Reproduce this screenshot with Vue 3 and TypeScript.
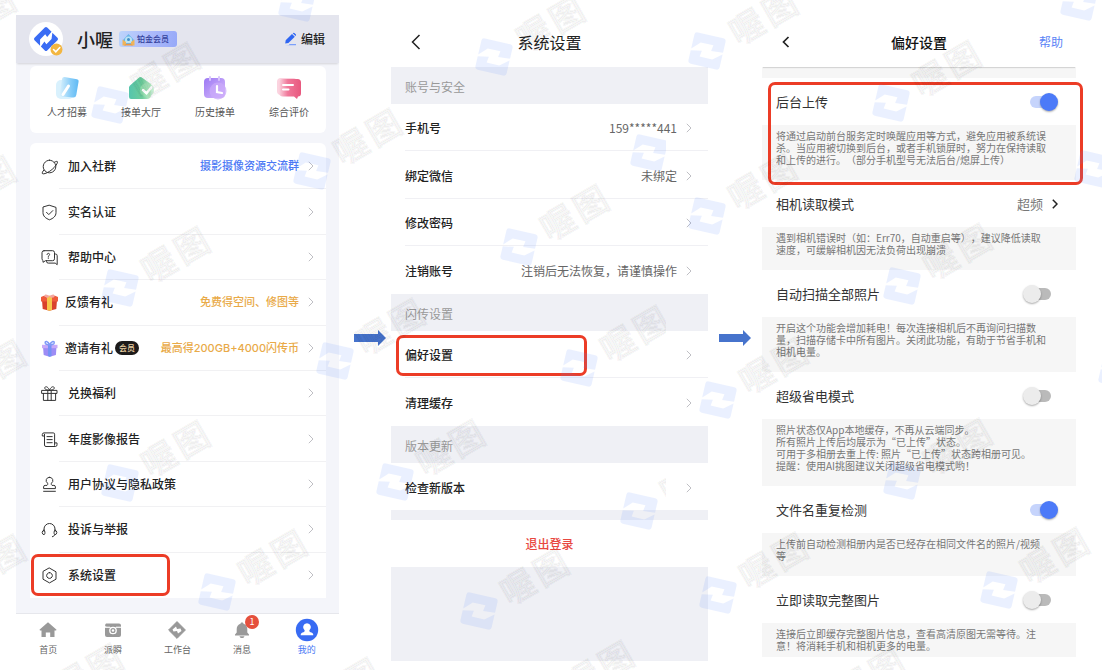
<script setup lang="ts">
import { reactive } from 'vue'

interface MenuItem {
  label: string
  icon: string
  value?: string
  tone?: 'blue' | 'gold'
  member?: boolean
  marked?: boolean
}

interface SettingRow {
  label: string
  value?: string
  marked?: boolean
}

interface Preference {
  id: string
  label: string
  lines: string[]
  kind: 'switch' | 'link'
  on?: boolean
  value?: string
  marked?: boolean
}

const strokes: Record<string, string[]> = {
  planet: [
    'M8.5 2.2a6.3 6.3 0 1 0 .01 0z',
    'M13.4 4.2C16 2.9 17 3 16.2 5.2c-1 2.600-4.300 5.900-7.400 8-3.300 2.200-6.900 3.300-7.500 2.300-.3-.7.3-1.900 1.600-3.500',
  ],
  shield: ['M8.500 1.300 15 3.400v5.200c0 3.600-2.700 5.800-6.500 7.200C4.700 14.400 2 12.200 2 8.600V3.400z', 'M5.500 8.300l2.300 2.300 4-4'],
  help: [
    'M3 1.700h8.600a1.900 1.900 0 0 1 1.900 1.900v6.200a1.900 1.900 0 0 1-1.900 1.900H4.500L2 13.300V11.500a1.900 1.900 0 0 1-1-1.700V3.600a1.900 1.900 0 0 1 2-1.900z',
    'M13.500 5h.9a1.800 1.800 0 0 1 1.800 1.800v8.900l-2-1.600H7.300a1.800 1.800 0 0 1-1.800-1.800v-.6',
    'M6 5.500c0-1.600 2.600-1.600 2.600 0 0 1-1.300 1-1.300 2M7.300 8.800v.6',
  ],
  present: [
    'M1 5.400h15v3H1z',
    'M2.400 8.400v7h12.200v-7M6.800 5.400v10M10.200 5.400v10',
    'M8.500 5.200C7 1.400 4.400 1 3.800 2.600c-.4 1.300.8 2.400 4.700 2.600zM8.500 5.200c1.500-3.800 4.100-4.200 4.700-2.600.4 1.300-.8 2.400-4.700 2.600z',
  ],
  report: [
    'M3.500 5H1.300V3.500A1.700 1.700 0 0 1 3 1.900h9.300a1.300 1.300 0 0 1 1.300 1.300v8.600M3.500 5V3.300M3.500 5v9a1.500 1.500 0 0 0 1.500 1.500h9.500a1.600 1.600 0 0 0 1.500-1.700v-1.900h-2.400v2.400',
    'M6 5.600h5.200M6 8.600h5.200M6 11.700h5.200',
  ],
  stamp: [
    'M8.500 1.300a3.200 3.200 0 0 1 2 5.800c-.5.900-.2 1.700.5 2.300h1.900a1.500 1.500 0 0 1 1.500 1.500v1.700H2.600v-1.700a1.500 1.500 0 0 1 1.500-1.500H6c.7-.6 1-1.400.5-2.300a3.200 3.200 0 0 1 2-5.800z',
    'M2.600 15.300h11.800',
  ],
  headset: [
    'M3 10.200V8a5.500 5.500 0 0 1 11 0v2.200',
    'M3 9.200a2.300 2.300 0 0 0 0 4.500c1.300 0 1.300-4.500 0-4.500zM14 9.200a2.300 2.300 0 0 1 0 4.500c-1.300 0-1.300-4.500 0-4.500zM13.800 13.700c-.4 1.100-1.200 1.800-2.400 2',
  ],
  settings: ['M8.500 1.100 15 4.800v7.400l-6.500 3.700L2 12.200V4.800z', 'M8.500 5.600a2.900 2.900 0 1 0 .01 0z'],
}

const menu: MenuItem[] = [
  { label: '加入社群', icon: 'planet', value: '摄影摄像资源交流群', tone: 'blue' },
  { label: '实名认证', icon: 'shield' },
  { label: '帮助中心', icon: 'help' },
  { label: '反馈有礼', icon: 'gift-red', value: '免费得空间、修图等', tone: 'gold' },
  { label: '邀请有礼', icon: 'gift-violet', value: '最高得200GB+4000闪传币', tone: 'gold', member: true },
  { label: '兑换福利', icon: 'present' },
  { label: '年度影像报告', icon: 'report' },
  { label: '用户协议与隐私政策', icon: 'stamp' },
  { label: '投诉与举报', icon: 'headset' },
  { label: '系统设置', icon: 'settings', marked: true },
]

const shortcuts = ['人才招募', '接单大厅', '历史接单', '综合评价']
const tabs = ['首页', '派瞬', '工作台', '消息', '我的']

const groups: { title: string; rows: SettingRow[] }[] = [
  {
    title: '账号与安全',
    rows: [
      { label: '手机号', value: '159*****441' },
      { label: '绑定微信', value: '未绑定' },
      { label: '修改密码' },
      { label: '注销账号', value: '注销后无法恢复，请谨慎操作' },
    ],
  },
  { title: '闪传设置', rows: [{ label: '偏好设置', marked: true }, { label: '清理缓存' }] },
  { title: '版本更新', rows: [{ label: '检查新版本' }] },
]

const preferences = reactive<Preference[]>([
  {
    id: 'background-upload',
    label: '后台上传',
    kind: 'switch',
    on: true,
    marked: true,
    lines: [
      '将通过启动前台服务定时唤醒应用等方式，避免应用被系统误',
      '杀。当应用被切换到后台，或者手机锁屏时，努力在保持读取',
      '和上传的进行。（部分手机型号无法后台/熄屏上传）',
    ],
  },
  {
    id: 'read-mode',
    label: '相机读取模式',
    kind: 'link',
    value: '超频',
    lines: ['遇到相机错误时（如：Err70，自动重启等），建议降低读取', '速度，可缓解相机因无法负荷出现崩溃'],
  },
  {
    id: 'auto-scan',
    label: '自动扫描全部照片',
    kind: 'switch',
    on: false,
    lines: [
      '开启这个功能会增加耗电！每次连接相机后不再询问扫描数',
      '量，扫描存储卡中所有图片。关闭此功能，有助于节省手机和',
      '相机电量。',
    ],
  },
  {
    id: 'power-saving',
    label: '超级省电模式',
    kind: 'switch',
    on: false,
    lines: [
      '照片状态仅App本地缓存，不再从云端同步。',
      '所有照片上传后均展示为“已上传”状态。',
      '可用于多相册去重上传: 照片“已上传”状态跨相册可见。',
      '提醒：使用AI挑图建议关闭超级省电模式哟！',
    ],
  },
  {
    id: 'duplicate-check',
    label: '文件名重复检测',
    kind: 'switch',
    on: true,
    lines: ['上传前自动检测相册内是否已经存在相同文件名的照片/视频', '等'],
  },
  {
    id: 'full-image',
    label: '立即读取完整图片',
    kind: 'switch',
    on: false,
    lines: ['连接后立即缓存完整图片信息，查看高清原图无需等待。注', '意！将消耗手机和相机更多的电量。'],
  },
])

const openTiles: [number, number][] = [
  [297, 3], [110, 105], [312, 171], [120, 288], [335, 361], [120, 483], [217, 592],
  [494, 57], [707, 51], [519, 247], [707, 216], [579, 368], [718, 400], [395, 482],
  [479, 611], [718, 595], [1079, 2], [891, 103], [1093, 169], [902, 286], [1117, 370],
  [902, 481], [999, 590],
]
const openWords: [number, number][] = [
  [-19, 14], [-19, 184], [-9, 368], [-9, 563], [165, 71], [367, 137], [175, 255], [390, 327],
  [175, 449], [272, 558], [88, 672], [550, 24], [763, 17], [574, 213], [762, 182], [773, 366],
  [450, 448], [534, 577], [773, 561], [345, 686], [599, 669], [946, 69], [957, 252],
  [957, 447], [1054, 556], [870, 676],
]
const clippedTiles: [number, number][] = [[649, 153], [639, 511]]
const clippedWords: [number, number][] = [[634, 334], [694, 477]]
</script>

<template>
  <main class="board">
    <section class="phone profile" aria-label="我的">
      <header class="profile-head">
        <span class="avatar">
          <svg width="34" height="34" viewBox="0 0 34 34" aria-hidden="true">
            <g fill="#3a6cf4" transform="translate(17 17) rotate(-45) scale(.56)">
              <path d="M-13-16h26a3 3 0 0 1 3 3V-2L4-1 5-7H-8L-16 1v-14a3 3 0 0 1 3-3z" />
              <path d="M13 16h-26a3 3 0 0 1-3-3V3L-5 1l-1 6H7L16 0v13a3 3 0 0 1-3 3z" />
            </g>
            <circle cx="27.500" cy="27.500" r="6" fill="#f3b640" />
            <path d="M24.500 27.500l2.300 2.300 4-4.300" fill="none" stroke="#fff" stroke-width="1.500" stroke-linecap="round" />
          </svg>
        </span>
        <h1 class="nick">小喔</h1>
        <span class="badge">
          <svg width="13" height="13" viewBox="0 0 13 13" aria-hidden="true">
            <path d="M1 7 6.500 1 12 7v5H1z" fill="#6bb6e8" />
            <path d="M3 7a3.500 3.500 0 0 1 7 0v3H3z" fill="#b9e3f4" />
            <path d="M.5 6.500 4 9v3.500H.5zM12.500 6.500 9 9v3.500h3.500z" fill="#efb45a" />
            <path d="M2 12.500c1-2.500 8-2.500 9 0z" fill="#e8994a" />
            <circle cx="6.500" cy="6.500" r="1.500" fill="#418fc9" />
          </svg>
          铂金会员
        </span>
        <button class="edit" type="button">
          <svg width="13" height="14" viewBox="0 0 13 14" aria-hidden="true">
            <path d="M1.200 11.500 1.700 8.300 8 2l2.800 2.700-6.400 6.400zM8.700 1.300c.7-.8 1.300-.8 2 0l.8.700c.7.700.7 1.300 0 2z" fill="#2f66f2" />
            <path d="M5.500 12h6.500v1.300H1.200L5 13z" fill="#7ba0fa" />
          </svg>
          编辑
        </button>
      </header>

      <div class="profile-body">
        <nav class="shortcuts" aria-label="快捷入口">
          <button v-for="(name, i) in shortcuts" :key="name" type="button" class="shortcut">
            <svg width="26" height="24" viewBox="0 0 26 24" aria-hidden="true">
              <defs>
                <linearGradient id="sky" x1="0" x2="1"><stop stop-color="#d9f1fd" /><stop offset=".6" stop-color="#86ccf8" /><stop offset="1" stop-color="#5fb9f4" /></linearGradient>
                <linearGradient id="mint" x1="0" x2="1"><stop stop-color="#56c5ad" /><stop offset=".6" stop-color="#6dcd9b" /><stop offset="1" stop-color="#c8efd0" /></linearGradient>
                <linearGradient id="grape" x1="0" x2="1" y2="1"><stop stop-color="#9c78f3" /><stop offset="1" stop-color="#d9bdfc" /></linearGradient>
                <linearGradient id="rose" x1="0" x2="1"><stop stop-color="#fbd3df" /><stop offset=".4" stop-color="#f0789a" /><stop offset="1" stop-color="#e8587e" /></linearGradient>
              </defs>
              <template v-if="i === 0">
                <rect x="2" y="4" width="18" height="19" rx="5" fill="#d9f1fd" />
                <path d="M10.500 1 23 3.300a2 2 0 0 1 1.600 2.300L22.300 19a3 3 0 0 1-3 2.500L8 20.500a2.500 2.500 0 0 1-2.300-3L8 3a2.500 2.500 0 0 1 2.500-2z" fill="url(#sky)" />
                <path d="M14.500 10 9 18.500" stroke="#fff" stroke-width="3" stroke-linecap="round" />
              </template>
              <template v-else-if="i === 1">
                <path d="M2 9.500 10.500 2a3 3 0 0 1 4 0L23 8v11a4 4 0 0 1-4 4H3a2 2 0 0 1-2-2V11z" fill="url(#mint)" />
                <circle cx="19" cy="14" r="7" fill="#a5e4b8" opacity=".6" />
                <path d="M15 14l3.500 3.300 5-6" fill="none" stroke="#fff" stroke-width="2.500" stroke-linecap="round" />
              </template>
              <template v-else-if="i === 2">
                <rect x="2" y="2" width="21" height="20" rx="4" fill="url(#grape)" />
                <circle cx="16" cy="15" r="8.500" fill="#c9a9fa" opacity=".75" />
                <path d="M8 1v3M17 1v3" stroke="#d9c5fd" stroke-width="2" stroke-linecap="round" />
                <path d="M15 10v6l5 1" fill="none" stroke="#fff" stroke-width="2.200" stroke-linecap="round" />
              </template>
              <template v-else>
                <rect x="1" y="2" width="20" height="17" rx="4" fill="#fbd3df" />
                <path d="M7 3h14.500A3.500 3.500 0 0 1 25 6.500v11a3 3 0 0 1-3 3l-1 2.500-3-2.500H7a4 4 0 0 1-4-4V7a4 4 0 0 1 4-4z" fill="url(#rose)" />
                <path d="M7 9h10M7 13.500h5.500" stroke="#fff" stroke-width="2" stroke-linecap="round" />
              </template>
            </svg>
            {{ name }}
          </button>
        </nav>

        <ul class="menu">
          <li v-for="item in menu" :key="item.label" :class="{ marked: item.marked }">
            <button type="button" class="menu-row">
              <svg v-if="strokes[item.icon]" class="line-icon" width="17" height="17" viewBox="0 0 17 17" aria-hidden="true">
                <path v-for="d in strokes[item.icon]" :key="d" :d="d" />
              </svg>
              <svg v-else width="17" height="17" viewBox="0 0 17 17" aria-hidden="true">
                <template v-if="item.icon === 'gift-red'">
                  <path d="M1 6h15l-.7 9-6.800 1.700L1.700 15z" fill="#d9412c" />
                  <path d="M0 3 3 1.800h11L17 3v4.500H0z" fill="#ee5a3c" />
                  <path d="M6 2h5v14l-2.500.7L6 16z" fill="#f7c64b" />
                  <path d="M8.500 3C6-.5 3 .3 3.500 2.500 4 4 7 4 8.500 3c1.500 1 4.500 1 5-.5C14 .3 11-.5 8.500 3z" fill="#f3a7a0" />
                </template>
                <template v-else>
                  <path d="M2 6.500h13.500l-.6 8.500-6.400 1.700L2.700 15z" fill="#9d8cf5" />
                  <path d="M1 4.800h15.500v3.400H1z" fill="#c7a9f8" />
                  <path d="M7 5h3.500v11.300l-2 .4L7 16z" fill="#7591f5" />
                  <path d="M8.700 4.800C7 .6 3.500.6 4.300 3.200c.4 1.200 2.500 1.600 4.400 1.600 1.900 0 4-.4 4.400-1.600.8-2.600-2.700-2.600-4.400 1.600z" fill="none" stroke="#7f9af7" stroke-width="1.500" />
                </template>
              </svg>
              <span class="menu-main" :class="{ gift: !strokes[item.icon] }">
                <span class="menu-label">{{ item.label }}</span>
                <span v-if="item.member" class="member">会员</span>
                <span v-if="item.value" class="menu-value" :class="item.tone">{{ item.value }}</span>
                <svg class="chevron" width="6" height="10" viewBox="0 0 6 10" aria-hidden="true"><path d="M.8.800 5 5 .8 9.200" /></svg>
              </span>
            </button>
          </li>
        </ul>
      </div>

      <nav class="tabs" aria-label="主导航">
        <button v-for="(tab, i) in tabs" :key="tab" type="button" class="tab" :class="{ current: i === 4 }">
          <svg width="24" height="24" viewBox="0 0 24 24" aria-hidden="true">
            <path v-if="i === 0" d="M12 4.200 20.300 11.500c.4.500.1.900-.5.900H18.500V19h-4.300v-4.500H9.800V19H5.500v-6.600H4.200c-.6 0-.9-.4-.5-.900z" fill="#999" />
            <template v-else-if="i === 1">
              <path d="M5 5.500h13a2 2 0 0 1 2 2V9H6a2 2 0 0 1-2-2z" fill="#999" />
              <path d="M4 9.500h16V17a2 2 0 0 1-2 2H6a2 2 0 0 1-2-2z" fill="#999" />
              <path d="M4 9.200h5M15 9.200h5" stroke="#fff" />
              <circle cx="12" cy="12.500" r="3.200" fill="#999" stroke="#fff" stroke-width="1.300" />
              <circle cx="12" cy="12.500" r="1.200" fill="#fff" />
            </template>
            <template v-else-if="i === 2">
              <path d="M12 3.600 20.400 12 12 20.400 3.600 12z" fill="#999" stroke="#999" stroke-linejoin="round" />
              <path d="M7.500 11.500 11 8.500l1 2.500 3.500-.5 1 2.500-3.500 2.500-1-2.500-3.500.5z" fill="#fff" />
            </template>
            <path v-else-if="i === 3" d="M12 4.500c.9 0 1.400.5 1.500 1.200 2.400.7 3.800 2.600 3.800 5.300v3.500l1.700 2v.9H5v-.9l1.700-2V11c0-2.700 1.400-4.600 3.800-5.300.1-.7.600-1.200 1.500-1.200zM9.500 18.200h5c-.4 1.300-1.300 1.800-2.500 1.800s-2.100-.5-2.500-1.800z" fill="#999" />
            <template v-else>
              <circle cx="12" cy="12" r="11.200" fill="#386bf3" />
              <path d="M12 5.300a4 4 0 0 1 2.300 7.200c0 1 .6 1.500 2.200 2.100 1.200.5 1.800 1.300 1.800 2.600H5.700c0-1.300.6-2.100 1.800-2.600 1.600-.6 2.200-1.100 2.200-2.100A4 4 0 0 1 12 5.300z" fill="#fff" />
            </template>
          </svg>
          <span v-if="i === 3" class="count">1</span>
          {{ tab }}
        </button>
      </nav>
    </section>

    <div class="arrow first">
      <svg width="32" height="16" viewBox="0 0 32 16" aria-hidden="true"><path d="M0 4h24V0l8 8-8 8v-4H0z" fill="#4673cc" /></svg>
    </div>

    <section class="phone system" aria-label="系统设置">
      <header class="bar">
        <button type="button" class="back" aria-label="返回">
          <svg width="10" height="16" viewBox="0 0 10 16" aria-hidden="true"><path d="M8.500 1 1.500 8l7 7" /></svg>
        </button>
        <h2>系统设置</h2>
      </header>
      <template v-for="group in groups" :key="group.title">
        <h3 class="group-title">{{ group.title }}</h3>
        <ul class="group">
          <li v-for="row in group.rows" :key="row.label" :class="{ marked: row.marked }">
            <button type="button" class="group-row">
              <span class="group-label">{{ row.label }}</span>
              <span class="group-value">{{ row.value }}</span>
              <svg class="chevron" width="6" height="10" viewBox="0 0 6 10" aria-hidden="true"><path d="M.8.800 5 5 .8 9.200" /></svg>
            </button>
          </li>
        </ul>
      </template>
      <button type="button" class="logout">退出登录</button>
      <div class="filler"></div>
    </section>

    <div class="arrow">
      <svg width="32" height="16" viewBox="0 0 32 16" aria-hidden="true"><path d="M0 4h24V0l8 8-8 8v-4H0z" fill="#4673cc" /></svg>
    </div>

    <section class="phone prefs" aria-label="偏好设置">
      <header class="bar">
        <button type="button" class="back small" aria-label="返回">
          <svg width="8" height="12" viewBox="0 0 8 12" aria-hidden="true"><path d="M6.500 1 1.500 6l5 5" /></svg>
        </button>
        <h2>偏好设置</h2>
        <button type="button" class="help">帮助</button>
      </header>
      <div class="prefs-body">
        <div v-for="pref in preferences" :key="pref.id" class="pref" :class="{ marked: pref.marked }">
          <label v-if="pref.kind === 'switch'" class="pref-row" :for="pref.id">
            {{ pref.label }}
            <input :id="pref.id" v-model="pref.on" type="checkbox" role="switch" class="switch" />
          </label>
          <button v-else type="button" class="pref-row">
            {{ pref.label }}
            <span class="pref-value">{{ pref.value }}</span>
            <svg class="chevron dark" width="6" height="10" viewBox="0 0 6 10" aria-hidden="true"><path d="M.8.800 5 5 .8 9.200" /></svg>
          </button>
          <p class="note"><span v-for="line in pref.lines" :key="line">{{ line }}</span></p>
        </div>
      </div>
    </section>

    <svg class="watermark" aria-hidden="true">
      <defs>
        <g id="tile">
          <g transform="rotate(13)">
            <path d="M-13-16h26a3 3 0 0 1 3 3V-2L4-1 5-7H-8L-16 1v-14a3 3 0 0 1 3-3z" />
            <path d="M13 16h-26a3 3 0 0 1-3-3V3L-5 1l-1 6H7L16 0v13a3 3 0 0 1-3 3z" />
          </g>
        </g>
        <clipPath id="pane"><rect width="666" height="670" /></clipPath>
      </defs>
      <use v-for="([x, y], i) in openTiles" :key="'t' + i" href="#tile" class="tile" :x="x" :y="y" />
      <g v-for="([x, y], i) in openWords" :key="'w' + i" :transform="`translate(${x} ${y}) rotate(-30)`">
        <text class="word" x="-19 19" y="13">喔图</text>
      </g>
      <g clip-path="url(#pane)">
        <use v-for="([x, y], i) in clippedTiles" :key="'ct' + i" href="#tile" class="tile" :x="x" :y="y" />
        <g v-for="([x, y], i) in clippedWords" :key="'cw' + i" :transform="`translate(${x} ${y}) rotate(-30)`">
          <text class="word" x="-19 19" y="13">喔图</text>
        </g>
      </g>
    </svg>
  </main>
</template>

<style>
body {
  margin: 0;
  background: #fff;
}
</style>

<style scoped>
.board {
  position: relative;
  box-sizing: border-box;
  min-height: 100vh;
  padding: 15px 26px 0 16px;
  display: grid;
  grid-template-columns: 323fr 52px 317fr 54px 314fr;
  overflow: hidden;
  font-family: "Noto Sans CJK SC", sans-serif;
  font-size: 12px;
  line-height: 16px;
  text-spacing-trim: space-all;
  color: #222;
}
.board *,
.board *::before,
.board *::after {
  box-sizing: border-box;
}
button {
  margin: 0;
  padding: 0;
  border: 0;
  background: none;
  font: inherit;
  color: inherit;
  text-align: left;
  cursor: pointer;
}
ul {
  margin: 0;
  padding: 0;
  list-style: none;
}
h1,
h2,
h3,
p {
  margin: 0;
}
svg {
  flex: none;
}
.chevron {
  fill: none;
  stroke: #bfbfc4;
  stroke-width: 1;
}
.chevron.dark {
  stroke: #222;
  stroke-width: 1.500;
}
.marked {
  position: relative;
}
.marked::after {
  content: "";
  position: absolute;
  border: 3px solid #ec3c26;
  border-radius: 7px;
  pointer-events: none;
}

.profile-head {
  position: relative;
  display: flex;
  align-items: center;
  height: 48px;
  padding: 0 14px 0 13px;
  background: #e4e5ee;
  box-shadow: 0 2px 2px -1px #0002;
}
.avatar {
  display: flex;
  width: 34px;
  height: 34px;
  border-radius: 50%;
  background: #fff;
}
.nick {
  margin-left: 14px;
  font-size: 18px;
  line-height: 24px;
  font-weight: 500;
}
.badge {
  display: flex;
  align-items: center;
  gap: 2px;
  height: 16px;
  margin-left: 6px;
  padding: 0 8px 0 3px;
  border-radius: 3px;
  background: linear-gradient(100deg, #bcd4fb, #aebbfb 50%, #96a9f8);
  color: #33409a;
  font-size: 8px;
  font-weight: 500;
}
.edit {
  display: flex;
  align-items: center;
  gap: 4px;
  margin-left: auto;
  font-weight: 500;
}
.profile-body {
  padding: 3px 13px 15px 14px;
  background: #f4f5fa;
}
.shortcuts {
  display: grid;
  grid-template-columns: repeat(4, 1fr);
  min-height: 67px;
  margin-bottom: 10px;
  border-radius: 6px;
  background: #fff;
}
.shortcut {
  display: flex;
  flex-direction: column;
  align-items: center;
  gap: 4px;
  padding-top: 10px;
  font-size: 10px;
  line-height: 16px;
  color: #555;
}
.menu {
  display: grid;
  grid-auto-rows: 1fr;
  min-height: 455px;
  padding-top: 1px;
  border-radius: 6px 6px 0 0;
  background: #fff;
}
.menu li {
  display: flex;
}
.menu-row {
  flex: 1;
  display: flex;
  align-items: center;
  gap: 1px;
  padding-left: 11px;
}
.line-icon {
  fill: none;
  stroke: #333;
  stroke-width: 1;
  stroke-linejoin: round;
  stroke-linecap: round;
}
.menu-main {
  flex: 1;
  align-self: stretch;
  display: flex;
  align-items: center;
  padding: 0 12px 0 9px;
  border-bottom: 1px solid #f1f1f3;
}
.menu-main.gift {
  padding-left: 6px;
}
.menu li:last-child .menu-main {
  border-bottom: 0;
}
.menu-label {
  font-weight: 500;
}
.member {
  margin-left: 2px;
  padding: 0 4px;
  border-radius: 7px;
  background: #1d1b1a;
  color: #ecd2a4;
  font-size: 8px;
  line-height: 14px;
  font-weight: 500;
}
.menu-value {
  margin-left: auto;
  font-family: Inter, "Noto Sans CJK SC", sans-serif;
  font-size: 11px;
  font-weight: 500;
}
.menu-value.blue {
  color: #4a78f5;
}
.menu-value.gold {
  color: #e9aa48;
}
.menu-main .chevron {
  margin-left: auto;
}
.menu-main .menu-value + .chevron {
  margin-left: 9px;
}
.menu .marked::after {
  top: 1px;
  left: 1px;
  width: 139px;
  height: 42px;
}
.tabs {
  display: grid;
  grid-template-columns: repeat(5, 1fr);
  border-top: 1px solid #e6e7ec;
}
.tab {
  position: relative;
  display: flex;
  flex-direction: column;
  align-items: center;
  gap: 1px;
  padding-top: 4px;
  font-size: 9px;
  line-height: 14px;
  color: #666;
}
.tab.current {
  color: #4a7af5;
}
.count {
  position: absolute;
  top: 1px;
  left: 50%;
  width: 14px;
  height: 14px;
  margin-left: 3px;
  border-radius: 50%;
  background: #e5503d;
  color: #fff;
  font-size: 9px;
  text-align: center;
}

.arrow {
  display: flex;
  align-items: center;
  justify-content: center;
  padding-bottom: 9px;
}
.arrow.first {
  padding-left: 10px;
}

.bar {
  position: relative;
  display: grid;
  grid-template-columns: 1fr auto 1fr;
  align-items: center;
  height: 52px;
  padding: 2px 13px 0;
}
.bar h2 {
  grid-column: 2;
  font-size: 16px;
  line-height: 24px;
  font-weight: 400;
}
.back {
  display: flex;
  justify-self: start;
  margin-left: 7px;
}
.back svg {
  fill: none;
  stroke: #222;
  stroke-width: 1.500;
}
.group-title {
  padding: 12px 14px 9px;
  background: #eff0f5;
  color: #999;
  font-size: 12px;
  font-weight: 400;
}
.group li {
  display: flex;
  height: 47px;
  padding-left: 14px;
}
.group li:nth-child(even) {
  height: 48px;
}
.group-row {
  flex: 1;
  display: flex;
  align-items: center;
  padding: 2px 16px 0 0;
  border-bottom: 1px solid #f0f0f4;
}
.group li:last-child .group-row {
  border-bottom: 0;
}
.group-label {
  font-weight: 500;
}
.group-value {
  margin-left: auto;
  margin-right: 9px;
  color: #666;
}
.group .marked::after {
  top: 4px;
  left: 5px;
  width: 191px;
  height: 41px;
}
.logout {
  display: block;
  width: 100%;
  height: 57px;
  border-top: 10px solid #eff0f5;
  color: #e8483f;
  font-weight: 500;
  text-align: center;
}
.filler {
  height: 94px;
  background: #eff0f5;
}

.prefs .bar {
  box-shadow: 0 2px 1px -1px #0002;
}
.prefs .bar h2 {
  font-size: 14px;
  font-weight: 500;
  color: #111;
}
.back.small svg {
  stroke-width: 1.700;
}
.help {
  justify-self: end;
  color: #5a84f6;
}
.prefs-body {
  padding-top: 11px;
  background: #f6f6f6;
}
.pref-row {
  display: flex;
  align-items: center;
  width: 100%;
  height: 47px;
  padding: 0 18px 0 14px;
  background: #fff;
  font-size: 13px;
  color: #333;
}
.pref-value {
  margin-left: auto;
  margin-right: 9px;
  color: #777;
}
.note {
  padding: 5px 14px 14px;
  font-size: 10px;
  line-height: 12px;
  color: #777;
}
.note span {
  display: block;
}
.pref:last-child .note {
  padding-bottom: 5px;
}
.pref.marked::after {
  top: 4px;
  left: 6px;
  right: -7px;
  bottom: -5px;
}
.switch {
  appearance: none;
  position: relative;
  width: 35px;
  height: 18px;
  margin: 0 0 0 auto;
  cursor: pointer;
}
.switch::before {
  content: "";
  position: absolute;
  top: 3px;
  left: 7px;
  width: 21px;
  height: 12px;
  border-radius: 6px;
  background: #bababa;
}
.switch::after {
  content: "";
  position: absolute;
  top: 0;
  left: 0;
  width: 18px;
  height: 18px;
  border-radius: 50%;
  background: #ececec;
  box-shadow: 0 1px 2px #0005;
}
.switch:checked::before {
  background: #c6d4fc;
}
.switch:checked::after {
  left: 17px;
  background: #4c7af8;
}

.watermark {
  position: absolute;
  inset: 0;
  width: 100%;
  height: 100%;
  pointer-events: none;
}
.tile {
  fill: #5d8bff;
  fill-opacity: 0.130;
}
.word {
  font-size: 34px;
  font-weight: 500;
  text-anchor: middle;
  fill: #000;
  fill-opacity: 0.040;
  stroke: #000;
  stroke-opacity: 0.045;
  stroke-width: 2px;
}
</style>
